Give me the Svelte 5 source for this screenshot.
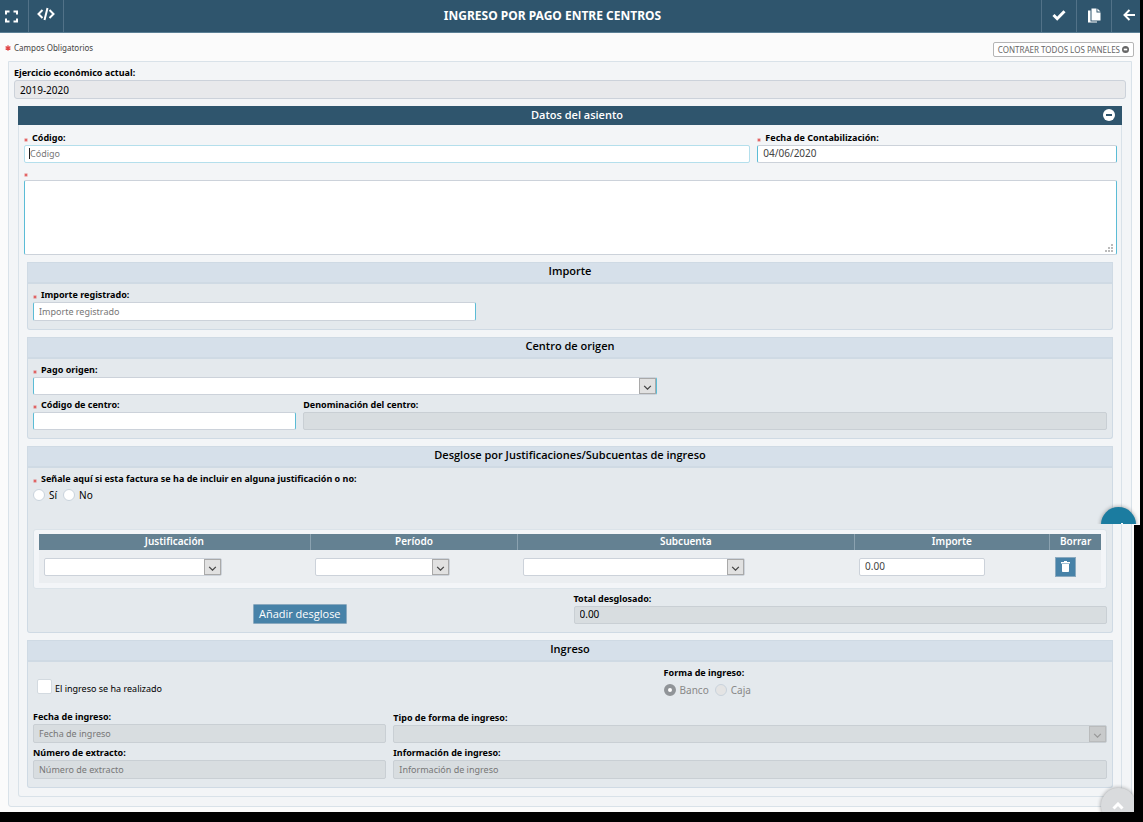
<script>
  let codigo = "";
  let fecha = "04/06/2020";
  let descripcion = "";
  let importe = "";
  let justificar = "";
  let forma = "banco";
  let realizado = false;
  let lineas = [{ id: 1, importe: "0.00" }];

  function addLinea() {
    const id = lineas.length ? lineas[lineas.length - 1].id + 1 : 1;
    lineas = [...lineas, { id, importe: "0.00" }];
  }

  function removeLinea(id) {
    lineas = lineas.filter((l) => l.id !== id);
  }
</script>

{#snippet star()}
  <svg class="star" viewBox="0 0 10 10" aria-hidden="true">
    <path d="M5 0.5v9M1 2.7l8 4.6M9 2.7l-8 4.6" />
  </svg>
{/snippet}

{#snippet combo(id, name, required, disabled)}
  <div class="combo" class:required class:disabled>
    <select {id} aria-label={name} {disabled}>
      <option value=""></option>
    </select>
    <span class="arrow">
      <svg viewBox="0 0 10 6" aria-hidden="true"><path d="M1 1l4 4 4-4" /></svg>
    </span>
  </div>
{/snippet}

<div class="page">
  <header class="topbar">
    <button type="button" class="tool first" aria-label="Pantalla completa">
      <svg width="13" height="13" viewBox="0 0 13 13"><path class="line" d="M1 4.500V1.500h3.500M8.500 1.500H12v3M12 8.500v3H8.500M4.500 11.500H1v-3" /></svg>
    </button>
    <button type="button" class="tool code" aria-label="Código fuente">
      <svg width="18" height="14" viewBox="0 0 18 14"><path class="line" d="M5.500 3L1.500 7l4 4M12.500 3l4 4-4 4M10.500 1l-3 12" /></svg>
    </button>
    <h1>INGRESO POR PAGO ENTRE CENTROS</h1>
    <button type="button" class="tool right" aria-label="Aceptar">
      <svg width="14" height="12" viewBox="0 0 14 12"><path class="thick" d="M1.500 6l3.700 3.700L12.500 2.200" /></svg>
    </button>
    <button type="button" class="tool right" aria-label="Copiar">
      <svg width="14" height="15" viewBox="0 0 14 15">
        <path class="solid" d="M4.500 0.500h5v4h4v8h-9zM10.400 0.500l3.100 3.100h-3.100zM1 2.500h2.500v11h6.500V14.500H1z" />
      </svg>
    </button>
    <button type="button" class="tool right last" aria-label="Volver">
      <svg width="12" height="12" viewBox="0 0 12 12"><path class="line" d="M6.500 1L1.500 6l5 5M2 6h10" /></svg>
    </button>
  </header>

  <div class="legend">
    <span class="mandatory">{@render star()} Campos Obligatorios</span>
    <button type="button" class="collapse">
      CONTRAER TODOS LOS PANELES
      <svg width="7" height="7" viewBox="0 0 8 8"><circle cx="4" cy="4" r="4" /><path d="M2 4h4" /></svg>
    </button>
  </div>

  <main class="outer">
    <div class="field">
      <label for="ejercicio">Ejercicio económico actual:</label>
      <input id="ejercicio" class="tall readonly" value="2019-2020" readonly />
    </div>

    <section class="asiento">
      <div class="asiento-head">
        <h2>Datos del asiento</h2>
        <button type="button" aria-label="Contraer panel">
          <svg width="12" height="12" viewBox="0 0 12 12"><circle cx="6" cy="6" r="6" /><path d="M3 6h6" /></svg>
        </button>
      </div>

      <div class="asiento-body">
        <div class="grid">
          <div class="field span8">
            <label for="codigo">{@render star()} Código:</label>
            <div class="caret-box">
              <input id="codigo" class="focused" placeholder="Código" bind:value={codigo} />
              <span class="caret"></span>
            </div>
          </div>
          <div class="field span4">
            <label for="fecha">{@render star()} Fecha de Contabilización:</label>
            <input id="fecha" class="required" bind:value={fecha} />
          </div>
          <div class="field span12">
            <label for="descripcion" aria-label="Descripción">{@render star()}</label>
            <div class="area">
              <textarea id="descripcion" class="required" bind:value={descripcion}></textarea>
              <svg class="grip" width="8" height="8" viewBox="0 0 8 8" aria-hidden="true">
                <path d="M6 0h2v2H6zM3 3h2v2H3zM6 3h2v2H6zM0 6h2v2H0zM3 6h2v2H3zM6 6h2v2H6z" />
              </svg>
            </div>
          </div>
        </div>

        <section class="panel">
          <h3>Importe</h3>
          <div class="grid">
            <div class="field span5">
              <label for="importe">{@render star()} Importe registrado:</label>
              <input id="importe" class="tall required" placeholder="Importe registrado" bind:value={importe} />
            </div>
          </div>
        </section>

        <section class="panel">
          <h3>Centro de origen</h3>
          <div class="grid">
            <div class="field span7">
              <label for="pago">{@render star()} Pago origen:</label>
              {@render combo("pago", "Pago origen", true, false)}
            </div>
            <div class="field span3 newline">
              <label for="centro">{@render star()} Código de centro:</label>
              <input id="centro" class="required" />
            </div>
            <div class="field span9">
              <label for="denominacion">Denominación del centro:</label>
              <input id="denominacion" disabled />
            </div>
          </div>
        </section>

        <section class="panel">
          <h3>Desglose por Justificaciones/Subcuentas de ingreso</h3>
          <div class="grid">
            <fieldset class="field span12">
              <legend>{@render star()} Señale aquí si esta factura se ha de incluir en alguna justificación o no:</legend>
              <div class="radios">
                <label><input type="radio" value="si" bind:group={justificar} /> Sí</label>
                <label><input type="radio" value="no" bind:group={justificar} /> No</label>
              </div>
            </fieldset>

            <div class="table-box span12">
              <table>
                <thead>
                  <tr>
                    <th class="c-just">Justificación</th>
                    <th class="c-per">Período</th>
                    <th class="c-sub">Subcuenta</th>
                    <th class="c-imp">Importe</th>
                    <th class="c-del">Borrar</th>
                  </tr>
                </thead>
                <tbody>
                  {#each lineas as linea (linea.id)}
                    <tr>
                      <td>{@render combo("just-" + linea.id, "Justificación", false, false)}</td>
                      <td>{@render combo("per-" + linea.id, "Período", false, false)}</td>
                      <td>{@render combo("sub-" + linea.id, "Subcuenta", false, false)}</td>
                      <td><input aria-label="Importe" bind:value={linea.importe} /></td>
                      <td>
                        <button type="button" class="trash" aria-label="Borrar" on:click={() => removeLinea(linea.id)}>
                          <svg width="9" height="11" viewBox="0 0 9 11"><path d="M3 0h3v1h3v1.500H0V1h3zM1 3h7v7.200q0 .8-.8.8H1.800Q1 11 1 10.200z" /></svg>
                        </button>
                      </td>
                    </tr>
                  {/each}
                </tbody>
              </table>
            </div>

            <div class="span6 add">
              <button type="button" on:click={addLinea}>Añadir desglose</button>
            </div>
            <div class="field span6">
              <label for="total">Total desglosado:</label>
              <input id="total" class="total" value="0.00" disabled />
            </div>
          </div>
        </section>

        <section class="panel">
          <h3>Ingreso</h3>
          <div class="grid">
            <div class="span7 check">
              <input id="realizado" type="checkbox" bind:checked={realizado} />
              <label for="realizado">El ingreso se ha realizado</label>
            </div>
            <fieldset class="field span5 forma" disabled>
              <legend>Forma de ingreso:</legend>
              <div class="radios">
                <label><input type="radio" value="banco" bind:group={forma} /> Banco</label>
                <label><input type="radio" value="caja" bind:group={forma} /> Caja</label>
              </div>
            </fieldset>
            <div class="field span4">
              <label for="fecha-ingreso">Fecha de ingreso:</label>
              <input id="fecha-ingreso" class="tall" placeholder="Fecha de ingreso" disabled />
            </div>
            <div class="field span8">
              <label for="tipo">Tipo de forma de ingreso:</label>
              {@render combo("tipo", "Tipo de forma de ingreso", false, true)}
            </div>
            <div class="field span4">
              <label for="extracto">Número de extracto:</label>
              <input id="extracto" class="tall" placeholder="Número de extracto" disabled />
            </div>
            <div class="field span8">
              <label for="info">Información de ingreso:</label>
              <input id="info" class="tall" placeholder="Información de ingreso" disabled />
            </div>
          </div>
        </section>
      </div>
    </section>
  </main>

  <div class="edge"></div>
  <div class="bubble help"><button type="button" aria-label="Ayuda"><i></i></button></div>
  <div class="bubble up">
    <button type="button" aria-label="Subir">
      <svg width="12" height="8" viewBox="0 0 12 8"><path d="M1.500 6.500L6 2l4.500 4.500" /></svg>
    </button>
  </div>
</div>

<style>
  :global(body) {
    background: #000;
  }

  .page {
    position: relative;
    margin-right: 3px;
    padding-bottom: 5px;
    background: #fbfbfb;
    color: #000;
    font-family: "Noto Sans", "Open Sans", sans-serif;
    font-size: 10px;
    line-height: 14px;
  }

  h1,
  h2,
  h3 {
    margin: 0;
    font-weight: 700;
    text-align: center;
  }

  button,
  input,
  select,
  textarea {
    box-sizing: border-box;
    margin: 0;
    font-family: inherit;
    font-size: 10px;
  }

  button {
    padding: 0;
    cursor: pointer;
  }

  svg {
    display: block;
    flex: none;
  }

  /* top bar */
  .topbar {
    display: flex;
    height: 32px;
    border-bottom: 1px solid #5b7f95;
    background: #2f556d;
  }

  h1 {
    flex: 1;
    color: #fff;
    font-size: 12px;
    line-height: 32px;
  }

  .tool {
    display: flex;
    justify-content: center;
    align-items: center;
    width: 35px;
    border: 0;
    border-right: 1px solid #527288;
    background: none;
  }

  .tool.first {
    width: 29px;
    padding-right: 5px;
  }

  .tool.code {
    padding-bottom: 4px;
  }

  .tool.right {
    border-right: 0;
    border-left: 1px solid #527288;
    padding-bottom: 2px;
  }

  .tool.last {
    width: 29px;
    padding-left: 5px;
  }

  .line,
  .thick {
    fill: none;
    stroke: #fff;
    stroke-width: 2;
  }

  .thick {
    stroke-width: 3;
  }

  .solid {
    fill: #fff;
  }

  .legend {
    display: flex;
    justify-content: space-between;
    align-items: flex-start;
    height: 28px;
    padding: 0 6px 0 5px;
  }

  .mandatory {
    display: flex;
    align-items: center;
    gap: 3px;
    margin-top: 8px;
    color: #444;
    font-size: 8px;
  }

  .star {
    width: 4px;
    height: 4px;
    margin: 4px 4px 0 0;
  }

  .mandatory .star {
    width: 6px;
    height: 6px;
    margin: 0;
  }

  .star path {
    stroke: #e04545;
    stroke-width: 2;
  }

  .collapse {
    display: flex;
    align-items: center;
    gap: 2px;
    height: 15px;
    margin-top: 9px;
    padding: 0 4px;
    border: 1px solid #b5b5b5;
    border-radius: 2px;
    background: #fff;
    color: #666;
    font-size: 8px;
    line-height: 12px;
  }

  .collapse circle {
    fill: #666;
  }

  .collapse path {
    stroke: #fff;
    stroke-width: 2;
  }

  /* panels */
  .outer {
    margin: 0 8px;
    padding: 4px 5px 9px;
    border: 1px solid #d9e2e9;
    border-radius: 0 0 3px 3px;
    background: #f3f5f7;
  }

  .asiento {
    margin: 7px 4px 0;
  }

  .asiento-head {
    display: flex;
    align-items: center;
    height: 19px;
    padding: 0 7px 0 33px;
    background: #2f556d;
  }

  h2 {
    flex: 1;
    padding-bottom: 2px;
    color: #fff;
    font-family: "Open Sans", "Noto Sans", sans-serif;
    font-size: 11px;
    font-weight: 600;
  }

  .asiento-head button {
    padding-bottom: 1px;
    border: 0;
    background: none;
  }

  .asiento-head circle {
    fill: #fff;
  }

  .asiento-head path {
    stroke: #2f556d;
    stroke-width: 2;
  }

  .asiento-body {
    padding: 6px 4px 8px 5px;
    border: 1px solid #d9e2e9;
    border-top: 0;
    border-radius: 0 0 3px 3px;
  }

  .panel {
    margin: 7px 4px 0 3px;
    padding: 0 5px 8px;
    border: 1px solid #cfdae4;
    border-top: 0;
    border-radius: 0 0 3px 3px;
    background: #e4e9ed;
  }

  h3 {
    height: 19px;
    margin: 0 -6px 4px;
    border: 1px solid #cfdae4;
    border-bottom-width: 2px;
    background: #d6e0ea;
    font-family: "Open Sans", "Noto Sans", sans-serif;
    font-size: 11px;
    font-weight: 600;
    line-height: 16px;
  }

  .grid {
    display: grid;
    grid-template-columns: repeat(12, minmax(0, 1fr));
    gap: 3px 7px;
    align-items: end;
  }

  .span3 { grid-column: span 3; }
  .span4 { grid-column: span 4; }
  .span5 { grid-column: span 5; }
  .span6 { grid-column: span 6; }
  .span7 { grid-column: span 7; }
  .span8 { grid-column: span 8; }
  .span9 { grid-column: span 9; }
  .span12 { grid-column: span 12; }
  .span3.newline { grid-column: 1 / span 3; }

  /* fields */
  .field > label,
  legend {
    display: flex;
    align-items: center;
    box-sizing: border-box;
    height: 14px;
    padding: 0 0 1px;
    font-size: 9px;
    font-weight: 700;
  }

  fieldset {
    min-width: 0;
    margin: 0;
    padding: 0;
    border: 0;
  }

  .field > input,
  .caret-box input,
  td input {
    display: block;
    width: 100%;
    height: 18px;
    padding: 0 5px 2px;
    border: 1px solid #ccd2da;
    border-radius: 2px;
    background: #fff;
    color: #444;
    outline: none;
  }

  .field > input.tall {
    height: 19px;
  }

  .field > input.readonly {
    padding-bottom: 0;
    border-radius: 3px;
    background: #e8e9eb;
    color: #000;
  }

  .field > input:disabled {
    border-color: #c9cfd4;
    background: #d8dde0;
  }

  .field > input.total {
    color: #000;
  }

  ::placeholder {
    color: #777;
    font-size: 9px;
    opacity: 1;
  }

  .caret-box input.focused {
    border-color: #b4dfec;
  }

  .field > input.required,
  .combo.required,
  textarea.required {
    border-left-color: #5bbcd6;
    border-right-color: #5bbcd6;
  }

  .caret-box,
  .area {
    position: relative;
  }

  .caret {
    position: absolute;
    top: 3px;
    left: 5px;
    width: 1px;
    height: 11px;
    background: #222;
  }

  textarea {
    display: block;
    width: 100%;
    height: 75px;
    border: 1px solid #ccd2da;
    border-radius: 2px;
    background: #fff;
    outline: none;
    resize: none;
  }

  .grip {
    position: absolute;
    right: 4px;
    bottom: 3px;
    fill: #bbb;
  }

  .combo {
    display: grid;
    grid-template-columns: 1fr 17px;
    box-sizing: border-box;
    height: 18px;
    border: 1px solid #ccd2da;
    border-radius: 2px;
    background: #fff;
  }

  .combo select {
    grid-area: 1 / 1 / 2 / 3;
    width: 100%;
    height: 100%;
    border: 0;
    background: none;
    outline: none;
    appearance: none;
  }

  .arrow {
    grid-area: 1 / 2 / 2 / 3;
    display: flex;
    justify-content: center;
    align-items: center;
    padding-top: 3px;
    border: 1px solid #a9a9a9;
    background: #e1e1e1;
    pointer-events: none;
  }

  .arrow svg {
    width: 9px;
    height: 5px;
  }

  .arrow path {
    fill: none;
    stroke: #444;
    stroke-width: 1.5;
  }

  .combo.disabled {
    border-color: #c9cfd4;
    background: #d8dde0;
  }

  .disabled .arrow {
    border-color: #b9bbbc;
    background: #c8cacb;
  }

  .disabled .arrow path {
    stroke: #999;
  }

  .radios {
    display: flex;
    gap: 6px;
    height: 18px;
  }

  .radios label {
    display: flex;
    align-items: center;
    gap: 4px;
  }

  .radios input {
    width: 12px;
    height: 12px;
    border: 1px solid #c9d3dc;
    border-radius: 50%;
    background: #fff;
    appearance: none;
  }

  .radios input:checked {
    border: 4px solid #4782a8;
  }

  .forma .radios {
    height: 27px;
    color: #888;
  }

  .forma label {
    height: 20px;
  }

  .forma .radios input {
    background: #e4e4e4;
  }

  .forma .radios input:checked {
    border-color: #909498;
    background: #fff;
  }

  /* breakdown table */
  .table-box {
    margin-top: 22px;
    padding: 4px 5px 5px;
    border: 1px solid #dbe3e9;
    border-radius: 3px;
    background: #f3f5f8;
  }

  table {
    width: 100%;
    border-collapse: collapse;
    table-layout: fixed;
    background: #ebeef1;
  }

  th {
    height: 14px;
    padding: 0 0 2px;
    border-right: 1px solid #8ba2b0;
    background: #648192;
    color: #fff;
    font-weight: 600;
    line-height: 14px;
  }

  th:last-child {
    border-right: 0;
  }

  td {
    height: 33px;
    padding: 0 5px;
    vertical-align: middle;
  }

  .c-just { width: 25.6%; }
  .c-per { width: 19.5%; }
  .c-sub { width: 31.7%; }
  .c-imp { width: 18.4%; }
  .c-del { width: 4.8%; }

  td .combo,
  td input {
    width: 68%;
  }

  .trash {
    display: flex;
    justify-content: center;
    align-items: center;
    width: 21px;
    height: 20px;
    border: 1px solid #8aa9bf;
    background: #4782a8;
  }

  .trash path {
    fill: #fff;
  }

  .add {
    display: flex;
    justify-content: center;
  }

  .add button {
    height: 20px;
    padding: 0 5px 1px;
    border: 1px solid #8aa9bf;
    border-radius: 1px;
    background: #4782a8;
    color: #fff;
    font-family: "Open Sans", "Noto Sans", sans-serif;
    font-size: 11px;
    line-height: 16px;
  }

  .check {
    display: flex;
    align-items: center;
    gap: 3px;
    height: 31px;
    padding-left: 4px;
    align-self: center;
  }

  .check input {
    width: 15px;
    height: 15px;
    border: 1px solid #d3dae0;
    border-radius: 2px;
    background: #fff;
    appearance: none;
  }

  .check input:checked {
    background: #4782a8;
  }

  .check label {
    padding-top: 4px;
    font-size: 9px;
  }

  /* window edge and floating buttons */
  .edge {
    position: absolute;
    top: 525px;
    right: -3px;
    bottom: 0;
    width: 9px;
    background: #000;
  }

  .bubble {
    position: absolute;
    box-sizing: border-box;
    overflow: hidden;
  }

  .bubble button {
    display: block;
    width: 35px;
    height: 35px;
    border: 0;
    border-radius: 50%;
    box-shadow: 0 0 4px rgba(0, 0, 0, 0.4);
  }

  .help {
    top: 503px;
    right: 0;
    height: 21px;
    padding: 4px 4px 0;
  }

  .help button {
    background: #1b7ca0;
  }

  .help i {
    display: block;
    width: 2px;
    height: 2px;
    margin: -2px 0 0 20px;
    background: #fff;
  }

  .up {
    right: 6px;
    bottom: 0;
    width: 37px;
    height: 28px;
    padding: 4px 0 0 4px;
  }

  .up button {
    background: #d9dbdd;
  }

  .up svg {
    margin-left: 11px;
  }

  .up path {
    fill: none;
    stroke: #fff;
    stroke-width: 3;
  }
</style>
